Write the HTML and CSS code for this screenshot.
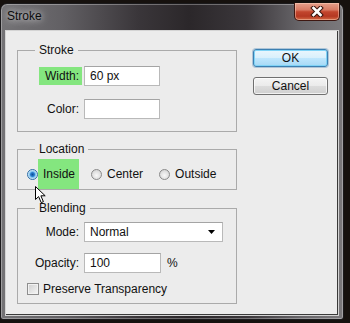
FILE: index.html
```html
<!DOCTYPE html>
<html lang="en">
<head>
    <meta charset="UTF-8">
    <meta name="viewport" content="width=device-width, initial-scale=1.0">
    <link rel="stylesheet" href="styles.css">
    <title>Stroke</title>
</head>
<body>
<div class="window">
    <div class="titlebar">
        <span class="title">Stroke</span>
        <div class="close-button">
            <svg width="14" height="11" viewBox="0 0 14 11">
                <path d="M3.5 2 L10.5 9 M10.5 2 L3.5 9" stroke="#3a1710" stroke-width="4.6" stroke-linecap="square"/>
                <path d="M3.5 2 L10.5 9 M10.5 2 L3.5 9" stroke="#ffffff" stroke-width="2.6" stroke-linecap="square"/>
            </svg>
        </div>
    </div>
    <div class="client">
        <div class="panels">
            <fieldset class="group stroke-group">
                <legend>Stroke</legend>
                <div class="form-grid">
                    <div class="field-label"><span class="highlight">Width:</span></div>
                    <div class="textbox width-box">60 px</div>
                    <div class="field-label"><span>Color:</span></div>
                    <div class="textbox width-box"></div>
                </div>
            </fieldset>

            <fieldset class="group location-group">
                <legend>Location</legend>
                <div class="radio-row">
                    <div class="radio-item">
                        <span class="radio checked"></span>
                        <span class="radio-label highlight">Inside</span>
                    </div>
                    <div class="radio-item">
                        <span class="radio"></span>
                        <span class="radio-label">Center</span>
                    </div>
                    <div class="radio-item">
                        <span class="radio"></span>
                        <span class="radio-label">Outside</span>
                    </div>
                </div>
                <svg class="cursor" width="13" height="18" viewBox="0 0 13 18">
                    <path d="M0.5 0.5 L0.5 13.5 L3.6 10.6 L6.2 16.6 L8.4 15.7 L5.9 9.8 L10.2 9.8 Z" fill="#ffffff" stroke="#000000" stroke-width="1" stroke-linejoin="miter"/>
                </svg>
            </fieldset>

            <fieldset class="group blending-group">
                <legend>Blending</legend>
                <div class="form-grid">
                    <div class="field-label"><span>Mode:</span></div>
                    <div class="textbox select-box">
                        <span>Normal</span>
                        <svg width="7" height="4" viewBox="0 0 7 4"><polygon points="0,0 7,0 3.5,4" fill="#000"/></svg>
                    </div>
                    <div class="field-label"><span>Opacity:</span></div>
                    <div class="opacity-cell">
                        <div class="textbox opacity-box">100</div>
                        <span class="unit">%</span>
                    </div>
                </div>
                <div class="check-row">
                    <span class="checkbox"></span>
                    <span>Preserve Transparency</span>
                </div>
            </fieldset>
        </div>

        <div class="buttons">
            <button class="btn btn-default">OK</button>
            <button class="btn">Cancel</button>
        </div>
    </div>
</div>
</body>
</html>
```

FILE: styles.css
```css
body {
    margin: 0;
    width: 350px;
    height: 323px;
    overflow: hidden;
    background-color: #16110e;
    font-family: "Liberation Sans", Arial, sans-serif;
    font-size: 12px;
    color: #111;
}

.window {
    margin-top: 3px;
    width: 344px;
    height: 317px;
    box-sizing: border-box;
    padding: 0 4px 3px 4px;
    display: flex;
    flex-direction: column;
    border: 1px solid #1b1a1c;
    border-radius: 7px 7px 3px 3px;
    background: linear-gradient(to right, #747376 0%, #626064 18%, #3a363a 40%, #2b272a 55%, #3b373b 72%, #69676b 88%, #7b797c 100%);
    box-shadow: inset 0 0 0 1px rgba(255, 255, 255, 0.3);
}

.titlebar {
    height: 26px;
    display: flex;
    justify-content: space-between;
    align-items: flex-start;
}

.title {
    padding: 5px 0 0 2px;
    line-height: 14px;
    color: #0c0c0c;
    text-shadow: 0 0 6px rgba(255, 255, 255, 0.7), 0 0 10px rgba(255, 255, 255, 0.5);
}

.close-button {
    width: 46px;
    height: 18px;
    margin-top: -1px;
    margin-right: -1px;
    display: flex;
    justify-content: center;
    align-items: center;
    box-sizing: border-box;
    border: 1px solid #3e1711;
    border-top: none;
    border-radius: 0 0 5px 5px;
    background: linear-gradient(#e7a08c 0%, #d87a63 40%, #c2452d 52%, #b53822 78%, #d46a45 100%);
    box-shadow: inset 0 0 0 1px rgba(255, 220, 200, 0.45);
}

.client {
    flex: 1;
    display: flex;
    padding: 12px 0 0 11px;
    background-color: #ececec;
    border: 1px solid #d4d4d4;
    box-shadow: inset -1px -1px 0 #3a3a3a;
}

.panels {
    width: 220px;
}

.group {
    position: relative;
    margin: 0;
    padding: 0;
    min-width: 0;
    border: 1px solid #aaaaaa;
}

.group legend {
    margin-left: 17px;
    padding: 0 4px;
    line-height: 14px;
}

.stroke-group {
    padding: 9px 0 12px;
}

.location-group {
    margin-top: 10px;
    padding-top: 3px;
}

.blending-group {
    margin-top: 11px;
    padding: 7px 0 5px;
}

.form-grid {
    display: grid;
    grid-template-columns: 64px auto;
    column-gap: 2px;
    row-gap: 11px;
    align-items: center;
}

.stroke-group .form-grid {
    row-gap: 13px;
}

.field-label {
    text-align: right;
}

.field-label span {
    display: inline-block;
    height: 18px;
    line-height: 18px;
    padding: 0 3px 0 6px;
}

.highlight {
    background-color: #84e67f;
}

.textbox {
    height: 20px;
    box-sizing: border-box;
    line-height: 18px;
    padding-left: 5px;
    background-color: #ffffff;
    border: 1px solid #b9b9b9;
    border-top-color: #a4a4a4;
}

.width-box {
    width: 76px;
}

.select-box {
    width: 139px;
    display: flex;
    justify-content: space-between;
    align-items: center;
    padding-right: 7px;
}

.opacity-cell {
    display: flex;
    align-items: center;
    gap: 6px;
}

.opacity-box {
    width: 77px;
}

.radio-row {
    height: 30px;
    display: flex;
    align-items: center;
    padding-left: 9px;
    gap: 12px;
}

.radio-item {
    display: flex;
    align-items: center;
    height: 100%;
}

.radio-label {
    display: flex;
    align-items: center;
    height: 100%;
    padding: 0 4px 0 5px;
}

.radio {
    width: 11px;
    height: 11px;
    box-sizing: border-box;
    border-radius: 50%;
    border: 1px solid #8a8a8a;
    background: radial-gradient(circle at 50% 60%, #f8f8f8 0%, #dedede 60%, #c8c8c8 100%);
}

.radio.checked {
    border-color: #2f6ea6;
    background: radial-gradient(circle, #0f4d96 0px, #2a7fd0 2px, #7fc2ef 3px, #d5ecfa 4.5px);
}

.cursor {
    position: absolute;
    left: 17px;
    top: 30px;
}

.check-row {
    display: flex;
    align-items: center;
    height: 18px;
    margin-top: 7px;
    padding-left: 9px;
    gap: 4px;
}

.checkbox {
    width: 12px;
    height: 12px;
    box-sizing: border-box;
    border: 1px solid #8e8e8e;
    background: linear-gradient(to bottom right, #cfcfcf, #f6f6f6);
    box-shadow: inset 0 0 0 1px #f2f2f2;
}

.buttons {
    margin-left: 16px;
    margin-top: 6px;
    display: flex;
    flex-direction: column;
    gap: 10px;
}

.btn {
    width: 75px;
    height: 18px;
    padding: 0;
    font-family: "Liberation Sans", Arial, sans-serif;
    font-size: 12px;
    line-height: 16px;
    color: #111;
    border: 1px solid #707070;
    border-radius: 3px;
    background: linear-gradient(#f4f4f4 0%, #ebebeb 48%, #dcdcdc 52%, #cfcfcf 100%);
    box-shadow: inset 0 0 0 1px rgba(255, 255, 255, 0.7);
}

.btn-default {
    border-color: #3c7fb1;
    background: linear-gradient(#eaf6fd 0%, #d9f0fc 48%, #bee6fd 52%, #a7d9f5 100%);
    box-shadow: inset 0 0 0 1px #7fd3f6, 0 0 0 1px rgba(60, 127, 177, 0.35);
}
```
